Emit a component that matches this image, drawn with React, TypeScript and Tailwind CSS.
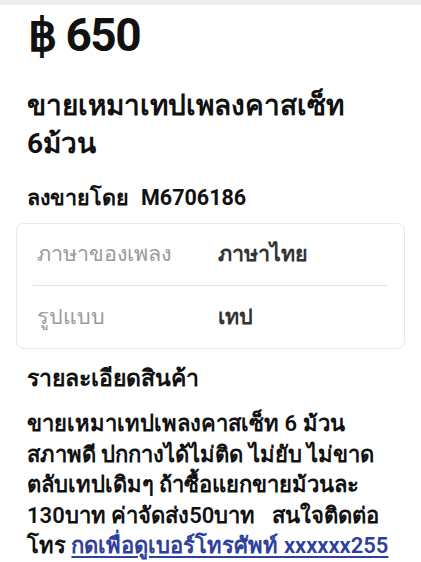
import React from 'react';

const specs = [
  { label: 'ภาษาของเพลง', value: 'ภาษาไทย' },
  { label: 'รูปแบบ', value: 'เทป' },
];

const description = [
  'ขายเหมาเทปเพลงคาสเซ็ท 6 ม้วน',
  'สภาพดี ปกกางได้ไม่ติด ไม่ยับ ไม่ขาด',
  'ตลับเทปเดิมๆ ถ้าซื้อแยกขายม้วนละ',
  '130บาท ค่าจัดส่ง50บาท \u00a0 สนใจติดต่อ',
];

export default function App() {
  return (
    <div className="min-h-screen bg-white text-[#111] font-['Roboto','Noto_Sans',sans-serif]">
      <div className="h-[5px] bg-[#ededed]" />

      <div className="px-[16px]">
        {/* Price */}
        <div className="pl-[12px] pt-[3px] text-[46px] font-bold leading-[54px] tracking-[-1.5px]">
          ฿ 650
        </div>

        {/* Title */}
        <h1 className="mt-[25px] pl-[11px] text-[28px] font-bold leading-[38px]">
          ขายเหมาเทปเพลงคาสเซ็ท<br />6ม้วน
        </h1>

        {/* Seller */}
        <div className="mt-[20px] pl-[11px] flex gap-[12px] text-[21.5px] font-bold leading-[30px]">
          <span>ลงขายโดย</span>
          <span>M6706186</span>
        </div>

        {/* Spec card */}
        <div className="mt-[10px] rounded-[8px] border border-[#e8e8e8] px-[16px]">
          {specs.map((s, i) => (
            <div
              key={i}
              className={`flex items-center h-[62px] text-[21.5px] ${i === 0 ? 'border-b border-[#e3e3e3]' : ''}`}
            >
              <span className="w-[185px] pl-[4px] text-[#9a9a9a]">{s.label}</span>
              <span className="font-bold text-[#333]">{s.value}</span>
            </div>
          ))}
        </div>

        {/* Description */}
        <h2 className="mt-[13px] pl-[11px] text-[23px] font-bold leading-[34px]">
          รายละเอียดสินค้า
        </h2>
        <div className="mt-[13px] pl-[11px] text-[22px] font-semibold leading-[30.5px] whitespace-nowrap">
          {description.map((line, i) => (
            <div key={i}>{line}</div>
          ))}
          <div>
            โทร{' '}
            <a href="#" className="text-[#2f3f9e] underline underline-offset-[3px]">
              กดเพื่อดูเบอร์โทรศัพท์ xxxxxx255
            </a>
          </div>
        </div>
      </div>
    </div>
  );
}
